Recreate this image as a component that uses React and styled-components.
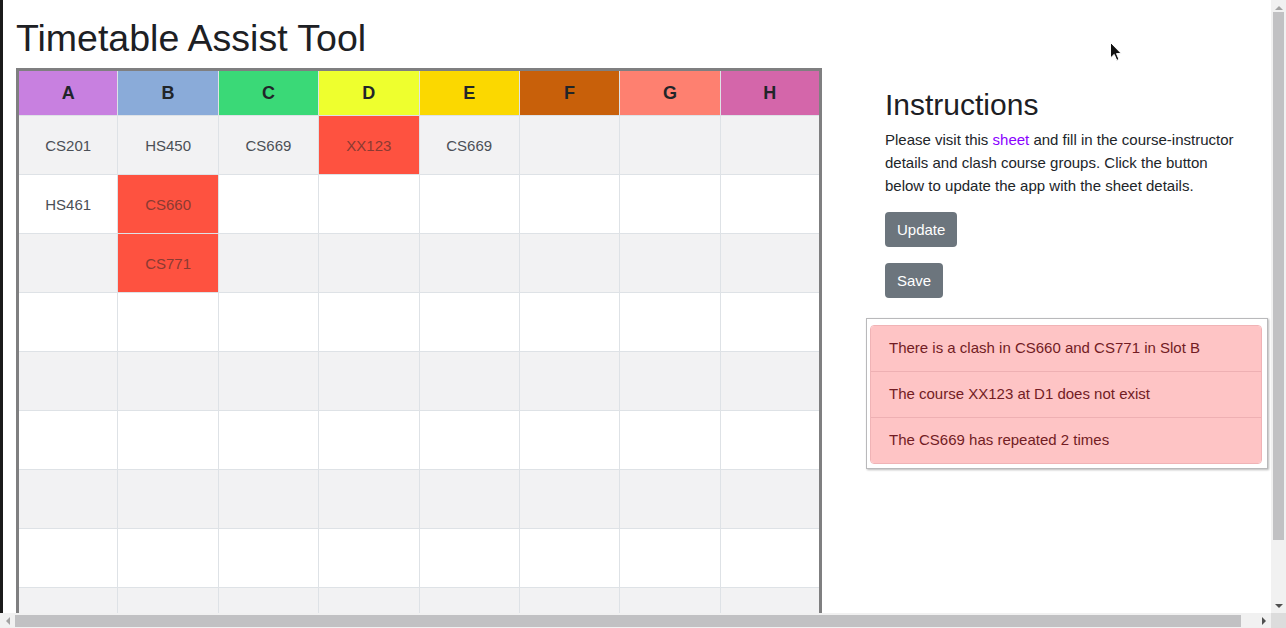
import React from 'react';
import styled, { createGlobalStyle, css } from 'styled-components';

const GlobalStyle = createGlobalStyle`
  html, body { margin: 0; padding: 0; background: #ffffff; }
  body {
    font-family: "Liberation Sans", Arial, Helvetica, sans-serif;
    color: #212529;
  }
  *, *::before, *::after { box-sizing: border-box; }
`;

const Page = styled.div`
  width: 1288px;
  padding: 16px 20px 29px 16px;
`;

const Title = styled.h1`
  font-size: 37.5px;
  font-weight: 400;
  line-height: 44px;
  margin: 0 0 8px;
  color: #1d2024;
`;

const Layout = styled.div`
  display: flex;
  align-items: flex-start;
  gap: 44px;
`;

const Grid = styled.table`
  width: 806px;
  table-layout: fixed;
  border-collapse: collapse;
  border: 3px solid #7f7f80;
  flex: none;
`;

const HeadCell = styled.th`
  height: 46px;
  background: ${(p) => p.$color};
  border: 1px solid #dee2e6;
  border-top: none;
  font-size: 18px;
  font-weight: 700;
  color: #212529;
  text-align: center;
  vertical-align: middle;
  padding: 0;
`;

const Row = styled.tr`
  background: ${(p) => (p.$striped ? '#f2f2f3' : '#ffffff')};
`;

const Cell = styled.td`
  height: 59px;
  border: 1px solid #dee2e6;
  background: ${(p) => (p.$clash ? '#fe5240' : 'transparent')};
  color: ${(p) => (p.$clash ? '#8b3a32' : '#4b4f56')};
  font-size: 15px;
  text-align: center;
  vertical-align: middle;
  padding: 0;
`;

const Side = styled.aside`
  width: 402px;
  flex: none;
`;

const Instructions = styled.section`
  padding: 19px 19px 20px;
`;

const SubTitle = styled.h2`
  font-size: 30px;
  font-weight: 400;
  line-height: 36px;
  margin: 0 0 5px;
  color: #1d2024;
`;

const Text = styled.p`
  font-size: 15px;
  line-height: 23px;
  margin: 0 0 15px;
  color: #212529;
`;

const SheetLink = styled.a`
  color: #8a00ff;
  text-decoration: none;
`;

const Actions = styled.div`
  display: flex;
  flex-direction: column;
  align-items: flex-start;
  gap: 16px;
`;

const Button = styled.button`
  font-family: inherit;
  font-size: 15px;
  line-height: 23px;
  padding: 6px 12px;
  border: none;
  border-radius: 4px;
  background: #6c757d;
  color: #ffffff;
  cursor: pointer;
`;

const AlertBox = styled.div`
  border: 1px solid #b9b9bb;
  box-shadow: 1px 1px 2px rgba(0, 0, 0, 0.28);
  padding: 6px 5px 4px 3px;
  background: #ffffff;
`;

const AlertList = styled.ul`
  list-style: none;
  margin: 0;
  padding: 0;
  border: 1px solid #f0b3b6;
  border-radius: 4px;
  overflow: hidden;
`;

const AlertItem = styled.li`
  background: #fec4c5;
  color: #721c24;
  font-size: 15px;
  line-height: 22.5px;
  padding: 11.25px 18px;
  & + & {
    border-top: 1px solid #eeb0b3;
  }
`;

/* ---- window chrome drawn over the page ---- */

const EdgeStrip = styled.div`
  position: fixed;
  left: 0;
  top: 0;
  width: 3px;
  height: 613px;
  background: #1b1b1b;
  pointer-events: none;
`;

const Pointer = styled.svg`
  position: fixed;
  left: 1110px;
  top: 42px;
  width: 12px;
  height: 19px;
  pointer-events: none;
`;

const ScrollTrack = styled.div`
  position: fixed;
  display: flex;
  align-items: center;
  background: #f1f1f1;
  ${(p) =>
    p.$vertical
      ? css`
          top: 0;
          right: 0;
          width: 15px;
          height: 613px;
          flex-direction: column;
        `
      : css`
          left: 0;
          bottom: 0;
          width: 1271px;
          height: 15px;
          flex-direction: row;
        `}
`;

const ScrollArrow = styled.div`
  flex: none;
  width: 15px;
  height: 15px;
  display: flex;
  align-items: center;
  justify-content: center;
  &::before {
    content: '';
    width: 0;
    height: 0;
    border: 4px solid transparent;
    ${(p) =>
      p.$dir === 'up' &&
      css`
        border-bottom-color: ${p.$dim ? '#a3a3a3' : '#505050'};
        border-top-width: 0;
      `}
    ${(p) =>
      p.$dir === 'down' &&
      css`
        border-top-color: ${p.$dim ? '#a3a3a3' : '#505050'};
        border-bottom-width: 0;
      `}
    ${(p) =>
      p.$dir === 'left' &&
      css`
        border-right-color: ${p.$dim ? '#a3a3a3' : '#505050'};
        border-left-width: 0;
      `}
    ${(p) =>
      p.$dir === 'right' &&
      css`
        border-left-color: ${p.$dim ? '#a3a3a3' : '#505050'};
        border-right-width: 0;
      `}
  }
`;

const ScrollThumb = styled.div`
  flex: none;
  background: #c1c1c3;
  ${(p) =>
    p.$vertical
      ? css`
          width: 11px;
          height: ${p.$size}px;
          margin-top: -3px;
        `
      : css`
          height: 12px;
          width: ${p.$size}px;
        `}
`;

const ScrollFill = styled.div`
  flex: 1;
`;

const ScrollCorner = styled.div`
  position: fixed;
  right: 0;
  bottom: 0;
  width: 15px;
  height: 15px;
  background: #dcdcdc;
`;

const slots = [
  { name: 'A', color: '#c880e0' },
  { name: 'B', color: '#8aabd9' },
  { name: 'C', color: '#3ad977' },
  { name: 'D', color: '#eeff2e' },
  { name: 'E', color: '#fbd800' },
  { name: 'F', color: '#c8600a' },
  { name: 'G', color: '#fe8070' },
  { name: 'H', color: '#d466aa' },
];

const rows = [
  [{ t: 'CS201' }, { t: 'HS450' }, { t: 'CS669' }, { t: 'XX123', clash: true }, { t: 'CS669' }, {}, {}, {}],
  [{ t: 'HS461' }, { t: 'CS660', clash: true }, {}, {}, {}, {}, {}, {}],
  [{}, { t: 'CS771', clash: true }, {}, {}, {}, {}, {}, {}],
  ...Array.from({ length: 6 }, () => Array.from({ length: 8 }, () => ({}))),
];

const alerts = [
  'There is a clash in CS660 and CS771 in Slot B',
  'The course XX123 at D1 does not exist',
  'The CS669 has repeated 2 times',
];

export default function App() {
  return (
    <>
      <GlobalStyle />
      <Page>
        <Title>Timetable Assist Tool</Title>
        <Layout>
          <Grid>
            <thead>
              <tr>
                {slots.map((s) => (
                  <HeadCell key={s.name} $color={s.color}>
                    {s.name}
                  </HeadCell>
                ))}
              </tr>
            </thead>
            <tbody>
              {rows.map((r, i) => (
                <Row key={i} $striped={i % 2 === 0}>
                  {r.map((c, j) => (
                    <Cell key={j} $clash={c.clash}>
                      {c.t || ''}
                    </Cell>
                  ))}
                </Row>
              ))}
            </tbody>
          </Grid>
          <Side>
            <Instructions>
              <SubTitle>Instructions</SubTitle>
              <Text>
                Please visit this <SheetLink href="#sheet">sheet</SheetLink> and fill in the
                course-instructor details and clash course groups. Click the button below to
                update the app with the sheet details.
              </Text>
              <Actions>
                <Button>Update</Button>
                <Button>Save</Button>
              </Actions>
            </Instructions>
            <AlertBox>
              <AlertList>
                {alerts.map((a) => (
                  <AlertItem key={a}>{a}</AlertItem>
                ))}
              </AlertList>
            </AlertBox>
          </Side>
        </Layout>
      </Page>
      <EdgeStrip />
      <Pointer viewBox="0 0 12 19">
        <path d="M0.5 0.5 L0.5 16 L4.2 12.4 L6.8 18.4 L9 17.4 L6.5 11.6 L11.3 11.6 Z" fill="#111" stroke="#fff" strokeWidth="1" />
      </Pointer>
      <ScrollTrack $vertical>
        <ScrollArrow $dir="up" $dim />
        <ScrollThumb $vertical $size={528} />
        <ScrollFill />
        <ScrollArrow $dir="down" />
      </ScrollTrack>
      <ScrollTrack>
        <ScrollArrow $dir="left" $dim />
        <ScrollThumb $size={1226} />
        <ScrollFill />
        <ScrollArrow $dir="right" />
      </ScrollTrack>
      <ScrollCorner />
    </>
  );
}
